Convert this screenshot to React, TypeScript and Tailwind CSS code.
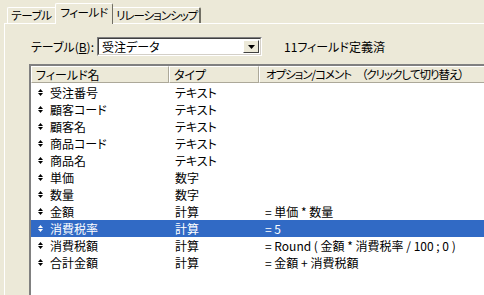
import React from 'react';

const rows = [
  { name: '受注番号', type: 'テキスト', opt: '' },
  { name: '顧客コード', type: 'テキスト', opt: '' },
  { name: '顧客名', type: 'テキスト', opt: '' },
  { name: '商品コード', type: 'テキスト', opt: '' },
  { name: '商品名', type: 'テキスト', opt: '' },
  { name: '単価', type: '数字', opt: '' },
  { name: '数量', type: '数字', opt: '' },
  { name: '金額', type: '計算', opt: '= 単価 * 数量' },
  { name: '消費税率', type: '計算', opt: '= 5' },
  { name: '消費税額', type: '計算', opt: '= Round ( 金額 * 消費税率 / 100 ; 0 )' },
  { name: '合計金額', type: '計算', opt: '= 金額 + 消費税額' },
];

const selectedRow = 8;

function MoveIcon({ light }: { light: boolean }) {
  return (
    <svg width="5" height="7" viewBox="0 0 5 7" className={light ? 'fill-white' : 'fill-black'}>
      <path d="M2.5 0 L5 3 L0 3 Z" />
      <path d="M0 4 L5 4 L2.5 7 Z" />
    </svg>
  );
}

export default function App() {
  return (
    <div
      className="w-[484px] h-[295px] overflow-hidden bg-[#ECE9D8] flex flex-col text-[12px] leading-none text-black whitespace-nowrap [font-feature-settings:'palt']"
      style={{ fontFamily: '"Noto Sans CJK JP", "Noto Sans", sans-serif' }}
    >
      {/* tabs */}
      <div className="h-[23px] flex items-end pl-[7px] relative z-10 shrink-0 text-[11.5px] tracking-[-0.4px]">
        <div className="h-[16px] w-[48px] shrink-0 flex items-center justify-center border-t border-l border-white rounded-tl-[2px]">
          テーブル
        </div>
        <div className="h-[21px] w-[58px] shrink-0 -mb-[1px] bg-[#ECE9D8] flex items-center justify-center pb-[2px] border-t border-l border-white border-r border-r-[#716F64] rounded-t-[2px]">
          フィールド
        </div>
        <div className="h-[16px] shrink-0 flex items-center pl-[3px] pr-[2px] tracking-[-1px] border-t border-white border-r-2 border-r-[#716F64] rounded-tr-[2px]">
          リレーションシップ
        </div>
      </div>

      {/* panel */}
      <div className="flex-1 ml-[4px] border-t border-l border-white flex flex-col min-h-0">
        <div className="mt-[13px] flex items-center h-[19px] shrink-0">
          <div className="w-[92px] shrink-0 flex justify-end pr-[3px]">
            <span>
              テーブル(<span className="underline">B</span>):
            </span>
          </div>
          <div className="w-[165px] h-[19px] shrink-0 border border-t-[#808080] border-l-[#808080] border-b-white border-r-white">
            <div className="h-full flex items-center bg-white border border-t-[#404040] border-l-[#404040] border-b-[#D4D0C8] border-r-[#D4D0C8]">
              <span className="flex-1 pl-[3px]">受注データ</span>
              <div className="w-[16px] h-[13px] mr-px bg-[#ECE9D8] flex items-center justify-center border border-t-white border-l-white border-b-[#404040] border-r-[#404040]">
                <svg width="7" height="4" viewBox="0 0 7 4">
                  <path d="M0 0 L7 0 L3.5 4 Z" fill="black" />
                </svg>
              </div>
            </div>
          </div>
          <div className="pl-[22px]">11フィールド定義済</div>
        </div>

        {/* list */}
        <div className="mt-[8px] ml-[24px] flex-1 border-t-2 border-l-2 border-t-[#808080] border-l-[#808080] bg-white flex flex-col">
          <div className="h-[17px] flex bg-[#ECE9D8] shrink-0">
            <div className="w-[138px] shrink-0 flex items-center pl-[4px] border-t border-l border-white border-b border-r border-b-[#ACA899] border-r-[#ACA899]">
              フィールド名
            </div>
            <div className="w-[90px] shrink-0 flex items-center pl-[4px] border-t border-l border-white border-b border-r border-b-[#ACA899] border-r-[#ACA899]">
              タイプ
            </div>
            <div className="flex-1 flex items-center pl-[6px] text-[11.5px] tracking-[-1px] border-t border-l border-white border-b border-b-[#ACA899]">
              オプション/コメント　（クリックして切り替え）
            </div>
          </div>
          <div className="pt-[1px]">
            {rows.map((r, i) => {
              const sel = i === selectedRow;
              return (
                <div
                  key={r.name}
                  className={`h-[17px] flex items-center ${sel ? 'bg-[#316AC5] text-white' : ''}`}
                >
                  <div className="w-[138px] shrink-0 flex items-center pl-[7px]">
                    <MoveIcon light={sel} />
                    <span className="ml-[7px]">{r.name}</span>
                  </div>
                  <div className="w-[90px] shrink-0 pl-[6px]">{r.type}</div>
                  <div className="flex-1 pl-[6px]">{r.opt}</div>
                </div>
              );
            })}
          </div>
        </div>
      </div>
    </div>
  );
}
